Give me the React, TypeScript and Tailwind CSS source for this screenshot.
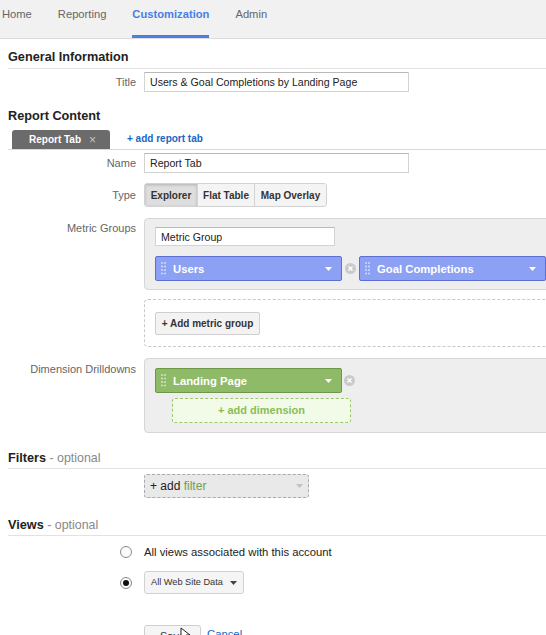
import clsx from "clsx";

// Customization > custom report editor (Google Analytics style)

const NAV_TABS = ["Home", "Reporting", "Customization", "Admin"];

function GripDots() {
  const rows = [1, 4.5, 8, 11.5];
  return (
    <svg width="5" height="13" viewBox="0 0 5 13" className="shrink-0">
      {rows.map((y) =>
        [1, 4].map((x) => (
          <rect key={`${x}-${y}`} x={x - 0.75} y={y - 0.75} width="1.5" height="1.5" fill="rgba(255,255,255,0.8)" />
        ))
      )}
    </svg>
  );
}

function Caret({ color = "#fff" }: { color?: string }) {
  return (
    <svg width="7" height="4" viewBox="0 0 7 4" className="shrink-0">
      <path d="M0 0h7L3.5 4z" fill={color} />
    </svg>
  );
}

function RemoveIcon() {
  return (
    <svg width="11" height="11" viewBox="0 0 11 11" className="block shrink-0">
      <circle cx="5.5" cy="5.5" r="5.5" fill="#cacaca" />
      <path d="M3.5 3.5l4 4M7.5 3.5l-4 4" stroke="#fff" strokeWidth="1.4" />
    </svg>
  );
}

interface ChipProps {
  label: string;
  tone: "blue" | "green";
}

function Chip({ label, tone }: ChipProps) {
  return (
    <div
      className={clsx(
        "flex h-[25px] w-[187px] shrink-0 items-center rounded-[2px] border pl-[5px] pr-[9px]",
        tone === "blue" ? "border-[#5d70d2] bg-[#8ca1f4]" : "border-[#6c9848] bg-[#8fba68]"
      )}
    >
      <GripDots />
      <span className="ml-[7px] flex-1 text-[11.3px] font-bold leading-[14px] text-white">{label}</span>
      <Caret />
    </div>
  );
}

function SectionHeading({ title, optional, className }: { title: string; optional?: boolean; className?: string }) {
  return (
    <div className={clsx("ml-[8px] border-b border-[#e2e2e2] leading-[16px]", className)}>
      <span className="text-[12.7px] font-bold text-[#222]">{title}</span>
      {optional && <span className="text-[12.4px] text-[#888]"> - optional</span>}
    </div>
  );
}

function Label({ children, className }: { children?: React.ReactNode; className?: string }) {
  return (
    <div className={clsx("w-[144px] shrink-0 pr-[8px] text-right text-[11px] leading-[14px] text-[#666]", className)}>
      {children}
    </div>
  );
}

function TextField({ value, className }: { value: string; className?: string }) {
  return (
    <input
      readOnly
      value={value}
      className={clsx(
        "block border border-[#d3d3d3] border-t-[#bababa] bg-white px-[5px] text-[10.6px] text-[#222] outline-none",
        className
      )}
    />
  );
}

function Radio({ checked }: { checked?: boolean }) {
  return (
    <span className="flex h-[12px] w-[12px] items-center justify-center rounded-full border border-[#8a8a8a] bg-[#fbfbfb]">
      {checked && <span className="h-[6px] w-[6px] rounded-full bg-[#111]" />}
    </span>
  );
}

export default function App() {
  return (
    <div className="relative h-[635px] w-[546px] overflow-hidden bg-white font-['Liberation_Sans',Arial,sans-serif] text-[#222]">
      {/* top navigation */}
      <nav className="flex h-[39px] gap-[26px] border-b border-[#dcdcdc] bg-[#f1f1f1] pl-[2px] text-[11.2px] text-[#666]">
        {NAV_TABS.map((tab) => (
          <div
            key={tab}
            className={clsx(
              "h-[38px] pt-[7px] leading-[14px]",
              tab === "Customization" && "border-b-[3px] border-[#4a7fe2] font-bold text-[#4a7fe2]"
            )}
          >
            {tab}
          </div>
        ))}
      </nav>

      {/* General Information */}
      <SectionHeading title="General Information" className="mt-[9px] pb-[3px]" />
      <div className="mt-[3px] flex items-center">
        <Label>Title</Label>
        <TextField value="Users & Goal Completions by Landing Page" className="h-[20px] w-[265px]" />
      </div>

      {/* Report Content */}
      <div className="ml-[8px] mt-[16px] text-[12.7px] font-bold leading-[16px]">Report Content</div>
      <div className="ml-[8px] mt-[6px] flex items-end border-b border-[#d9d9d9]">
        <div className="ml-[4px] flex h-[19px] w-[98px] items-center rounded-t-[3px] bg-[#6b6b6b] pl-[17px]">
          <span className="text-[10px] font-bold text-white">Report Tab</span>
          <span className="ml-[8px] text-[12px] leading-none text-[#c4c4c4]">×</span>
        </div>
        <span className="mb-[3px] ml-[17px] text-[10px] font-bold text-[#2065c4]">+ add report tab</span>
      </div>

      <div className="mt-[3px] flex items-center">
        <Label>Name</Label>
        <TextField value="Report Tab" className="h-[20px] w-[265px]" />
      </div>

      <div className="mt-[10px] flex items-center">
        <Label>Type</Label>
        <div className="flex h-[24px] overflow-hidden rounded-[3px] border border-[#d3d3d3] text-[10px] font-bold text-[#333]">
          <div className="flex w-[53px] items-center justify-center border-r border-[#d3d3d3] bg-[#dedede] shadow-[inset_0_1px_3px_rgba(0,0,0,0.2)]">
            Explorer
          </div>
          <div className="flex w-[57px] items-center justify-center border-r border-[#d3d3d3] bg-[#f4f4f4]">
            Flat Table
          </div>
          <div className="flex w-[71px] items-center justify-center bg-[#f4f4f4]">Map Overlay</div>
        </div>
      </div>

      {/* metric groups */}
      <div className="mt-[11px] flex">
        <Label className="pt-[3px]">Metric Groups</Label>
        <div className="w-[420px] shrink-0 rounded-[4px] border border-[#d6d6d6] bg-[#eeeeee] pb-[8px] pl-[10px] pt-[8px]">
          <TextField value="Metric Group" className="h-[19px] w-[180px] text-[10.3px]" />
          <div className="mt-[10px] flex items-center">
            <Chip label="Users" tone="blue" />
            <span className="mx-[3px]">
              <RemoveIcon />
            </span>
            <Chip label="Goal Completions" tone="blue" />
          </div>
        </div>
      </div>

      <div className="mt-[9px] flex">
        <Label />
        <div className="w-[420px] shrink-0 rounded-[4px] border border-dashed border-[#c9c9c9] pb-[11px] pl-[10px] pt-[12px]">
          <button className="flex h-[23px] w-[105px] items-center justify-center rounded-[2px] border border-[#cfcfcf] bg-[#f3f3f3] text-[10px] font-bold text-[#333]">
            + Add metric group
          </button>
        </div>
      </div>

      {/* dimension drilldowns */}
      <div className="mt-[11px] flex">
        <Label className="pt-[4px]">Dimension Drilldowns</Label>
        <div className="w-[420px] shrink-0 rounded-[4px] border border-[#d6d6d6] bg-[#eeeeee] pb-[9px] pl-[10px] pt-[9px]">
          <div className="flex items-center">
            <Chip label="Landing Page" tone="green" />
            <span className="ml-[2px]">
              <RemoveIcon />
            </span>
          </div>
          <div className="ml-[17px] mt-[5px] flex h-[25px] w-[179px] items-center justify-center rounded-[3px] border border-dashed border-[#9cc66f] bg-[#f1fbe7] text-[11px] font-bold text-[#8bbd5a]">
            + add dimension
          </div>
        </div>
      </div>

      {/* filters */}
      <SectionHeading title="Filters" optional className="mt-[16px] pb-[2px]" />
      <div className="mt-[5px] flex">
        <Label />
        <div className="flex h-[24px] w-[165px] items-center justify-between rounded-[3px] border border-dashed border-[#a9a9a9] bg-[#e9e9e9] pl-[5px] pr-[5px] text-[12px]">
          <span>
            + add <span className="text-[#6f9e4f]">filter</span>
          </span>
          <Caret color="#c2c2c2" />
        </div>
      </div>

      {/* views */}
      <SectionHeading title="Views" optional className="mt-[18px] pb-[2px]" />
      <div className="mt-[8px] flex h-[16px] items-center">
        <div className="flex w-[144px] shrink-0 justify-end pr-[12px]">
          <Radio />
        </div>
        <span className="text-[11.3px] text-[#222]">All views associated with this account</span>
      </div>
      <div className="mt-[11px] flex items-center">
        <div className="flex w-[144px] shrink-0 justify-end pr-[12px]">
          <Radio checked />
        </div>
        <div className="flex h-[23px] w-[100px] items-center justify-between rounded-[3px] border border-[#d2d2d2] bg-[#f5f5f5] pl-[6px] pr-[6px] text-[9.2px] text-[#333]">
          <span>All Web Site Data</span>
          <Caret color="#444" />
        </div>
      </div>

      <div className="mt-[29px] flex items-start">
        <Label />
        <div className="relative">
          <button className="h-[22px] w-[57px] rounded-[3px] border border-[#cfcfcf] bg-[#f5f5f5] text-[11px] leading-[14px] text-[#333]">
            Save
          </button>
          {/* mouse pointer */}
          <svg
            width="10"
            height="15"
            viewBox="0 0 10 15"
            className="absolute left-[36px] top-[4px]"
          >
            <path d="M1 1v11l3-3 2 5 2-1-2-5h4z" fill="#fff" stroke="#222" strokeWidth="1" strokeLinejoin="round" />
          </svg>
        </div>
        <span className="ml-[6px] mt-[4px] text-[11.3px] leading-[14px] text-[#2065c4]">Cancel</span>
      </div>
    </div>
  );
}
